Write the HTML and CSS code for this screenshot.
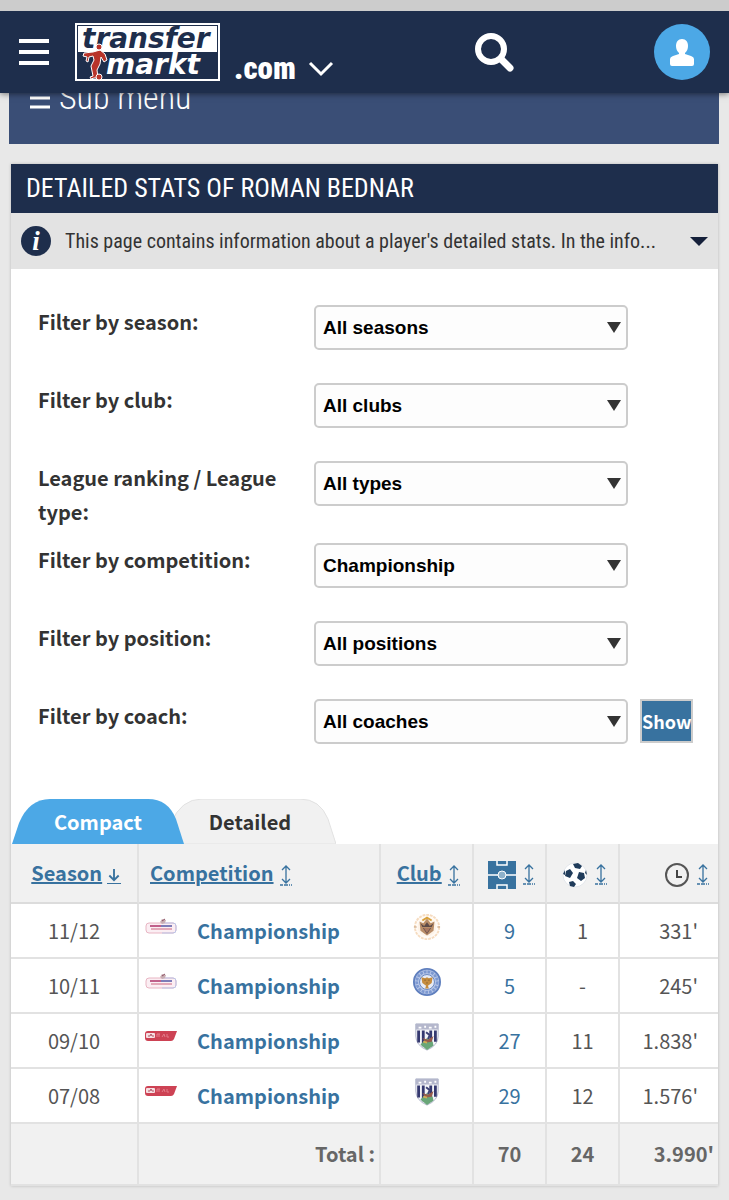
FILE: index.html
```html
<!DOCTYPE html>
<html lang="en">
<head>
    <meta charset="UTF-8">
    <meta name="viewport" content="width=device-width, initial-scale=1.0">
    <title>Detailed stats of Roman Bednar</title>
    <link rel="stylesheet" href="styles.css">
</head>
<body>
    <!-- shared icons -->
    <svg class="icon-defs" aria-hidden="true">
        <symbol id="icon-sort" viewBox="0 0 12 22">
            <path d="M6 1v17M2 5l4-4 4 4M2 14l4 4 4-4" fill="none" stroke="#38729f" stroke-width="1.3"/>
            <path d="M0 20h3M4 20h4M9 20h1M11 20h1" stroke="#38729f" stroke-width="1.3"/>
        </symbol>
        <symbol id="logo-npower" viewBox="0 0 32 18">
            <rect x="1" y="5" width="30" height="10" rx="3" fill="#fbeef3" stroke="#e8b5c3"/>
            <path d="M17 5h11q3 0 3 3v4q0 3-3 3H17" fill="none" stroke="#b9c5e8"/>
            <path d="M5 8h11" stroke="#c0608a" stroke-width="2"/>
            <path d="M16 8h11" stroke="#7d7cb8" stroke-width="2"/>
            <path d="M6 11h21" stroke="#e3a9b9" stroke-width="2"/>
            <path d="M15 4l2-3 4 1-1 3-3 1z" fill="#c9aeb3"/>
            <path d="M17 3l3-2" stroke="#8c4f62"/>
        </symbol>
        <symbol id="logo-cocacola" viewBox="0 0 32 18">
            <path d="M3 3h29l-3 8q-1 2-3 2H3q-3 0-3-3V6q0-3 3-3z" fill="#cd4254"/>
            <rect x="1" y="5" width="9" height="5" rx="1" fill="#f6dfe2"/>
            <path d="M3 8h2l1-2 1 2h2" fill="none" stroke="#b05667"/>
            <path d="M12 9V6h3M14 6v3M17 9l2-3 1 3M22 6v3h2" fill="none" stroke="#e37c8a"/>
        </symbol>
        <symbol id="crest-blackpool" viewBox="0 0 30 30">
            <circle cx="15" cy="15" r="13" fill="#fffaf5" stroke="#f6dcc0" stroke-width="2" stroke-dasharray="3 1"/>
            <circle cx="15" cy="15" r="10" fill="#fdf3e8"/>
            <path d="M7 9l4 2 4-5 4 5 4-2-1 10-7 5-7-5z" fill="#b98d68"/>
            <path d="M8 11l4 3 3-4 3 4 4-3-2 4H10z" fill="#5d4a48"/>
            <path d="M11 16l4 6 4-6" fill="#a9785f" stroke="#6c514c"/>
            <path d="M10 8l5-3 5 3" fill="none" stroke="#d8a13d" stroke-width="2"/>
            <path d="M1 15h3M26 15h3" stroke="#c19a77"/>
        </symbol>
        <symbol id="crest-leicester" viewBox="0 0 30 30">
            <circle cx="15" cy="15" r="14" fill="#b9c8e8" stroke="#5f7fbe" stroke-width="2"/>
            <circle cx="15" cy="15" r="11" fill="none" stroke="#7d99d1" stroke-width="3" stroke-dasharray="3 1"/>
            <circle cx="15" cy="15" r="8" fill="#e6ebf6" stroke="#6282c0"/>
            <path d="M9 10l4 1 2-1 2 1 4-1-1 6-4 3 1 3h-4l1-3-4-3z" fill="#c58c3e"/>
            <path d="M12 13h2M16 13h2M14 16h2" stroke="#8e6632"/>
        </symbol>
        <symbol id="crest-westbrom" viewBox="0 0 26 30">
            <path d="M1 1h24v13q0 10-12 15Q1 24 1 14z" fill="#f4f5f8" stroke="#aeb1c8"/>
            <path d="M1 1h24v6H1z" fill="#b4b7cc"/>
            <path d="M4 5h3M10 4h2M15 5h3M21 4h2" stroke="#fff" stroke-width="2"/>
            <path d="M4 8v13M9 8v17M17 8v17M22 8v12" stroke="#353970" stroke-width="3"/>
            <path d="M6 23l7-7 6 4 1 4-7 5z" fill="#69a678"/>
            <path d="M8 16l6 2 6-4-2 6-6 1z" fill="#985b4c"/>
            <path d="M12 10l4 3-2 4" fill="none" stroke="#3d4276" stroke-width="2"/>
            <path d="M9 20l4 1" stroke="#d5ad54" stroke-width="2"/>
        </symbol>
    </svg>

    <header class="header">
        <button class="menu-btn" type="button" aria-label="Menu">
            <svg width="30" height="28" viewBox="0 0 30 28"><path d="M0 3h30M0 14h30M0 25h30" stroke="#fff" stroke-width="4"/></svg>
        </button>
        <a class="logo" href="#" aria-label="Home">
            <svg width="145" height="58" viewBox="0 0 145 58">
                <rect x="1" y="1" width="143" height="56" fill="#1e2e4c" stroke="#fff" stroke-width="2"/>
                <rect x="3" y="3" width="139" height="26" fill="#fff"/>
                <text class="logo-text logo-top" x="7" y="25">transfer</text>
                <text class="logo-text logo-bottom" x="31" y="51">markt</text>
                <g stroke="#fff" stroke-width="1">
                    <path d="M18 29l7-2 5 4 2 6-3 2-3-5-1 7-3 6 1 8h-4l-3 1-1-2 3-1-2-10 3-6-1-4-4 1-1 5-2-1 1-4-4-1 1-3z" fill="#b8342a"/>
                    <circle cx="24" cy="24" r="3" fill="#b8342a"/>
                    <circle cx="24" cy="54" r="3" fill="#b8342a"/>
                </g>
            </svg>
        </a>
        <button class="domain-btn" type="button">
            .com
            <svg width="26" height="18" viewBox="0 0 26 18"><path d="M2 3l11 11L24 3" fill="none" stroke="#fff" stroke-width="3"/></svg>
        </button>
        <button class="search-btn" type="button" aria-label="Search">
            <svg width="42" height="42" viewBox="0 0 42 42">
                <circle cx="18" cy="18" r="13" fill="none" stroke="#fff" stroke-width="6"/>
                <path d="M28 28l9 9" stroke="#fff" stroke-width="7" stroke-linecap="round"/>
            </svg>
        </button>
        <button class="user-btn" type="button" aria-label="Log in">
            <svg width="56" height="56" viewBox="0 0 56 56">
                <circle cx="28" cy="28" r="28" fill="#4ca8e6"/>
                <path d="M28 15c4 0 6 3 6 7 0 3-1 5-3 7v1l6 2q3 1 3 3v5q0 2-2 2H18q-2 0-2-2v-5q0-2 3-3l6-2v-1c-2-2-3-4-3-7 0-4 2-7 6-7z" fill="#fff"/>
            </svg>
        </button>
    </header>

    <nav class="submenu">
        <a href="#">
            <svg width="20" height="26" viewBox="0 0 20 26"><path d="M0 5h20M0 14h20M0 23h20" stroke="#fff" stroke-width="3"/></svg>
            Sub menu
        </a>
    </nav>

    <main class="box">
        <h1>Detailed stats of Roman Bednar</h1>
        <div class="info">
            <svg width="30" height="30" viewBox="0 0 30 30">
                <circle cx="15" cy="15" r="15" fill="#1e2e4c"/>
                <text class="info-i" x="15" y="24">i</text>
            </svg>
            <p>This page contains information about a player's detailed stats. In the info...</p>
            <button type="button" aria-label="Show more">
                <svg width="18" height="9" viewBox="0 0 18 9"><path d="M0 0h18L9 9z" fill="#15203a"/></svg>
            </button>
        </div>

        <form class="filters">
            <div class="form-row">
                <label for="season">Filter by season:</label>
                <span class="select"><select id="season"><option>All seasons</option></select></span>
            </div>
            <div class="form-row">
                <label for="club">Filter by club:</label>
                <span class="select"><select id="club"><option>All clubs</option></select></span>
            </div>
            <div class="form-row">
                <label for="type">League ranking / League type:</label>
                <span class="select"><select id="type"><option>All types</option></select></span>
            </div>
            <div class="form-row">
                <label for="competition">Filter by competition:</label>
                <span class="select"><select id="competition"><option>Championship</option></select></span>
            </div>
            <div class="form-row">
                <label for="position">Filter by position:</label>
                <span class="select"><select id="position"><option>All positions</option></select></span>
            </div>
            <div class="form-row">
                <label for="coach">Filter by coach:</label>
                <span class="select"><select id="coach"><option>All coaches</option></select></span>
                <button class="show-btn" type="button">Show</button>
            </div>
        </form>

        <div class="tabs">
            <a class="tab active" href="#">
                <svg viewBox="0 0 172 45" preserveAspectRatio="none"><path d="M0 45L7 24Q17 0 38 0h98q20 0 28 20l8 25z" fill="#4ca8e6"/></svg>
                <span>Compact</span>
            </a>
            <a class="tab" href="#">
                <svg viewBox="0 0 172 45" preserveAspectRatio="none"><path d="M0 45L7 24Q17 0 38 0h98q20 0 28 20l8 25z" fill="#f1f1f1" stroke="#e2e2e2"/></svg>
                <span>Detailed</span>
            </a>
        </div>

        <table class="stats">
            <colgroup>
                <col class="col-season"><col><col class="col-club"><col class="col-num"><col class="col-num"><col class="col-min">
            </colgroup>
            <thead>
                <tr>
                    <th><a href="#">Season</a> <a class="sort-down" href="#" aria-label="Sorted by season"><svg width="14" height="16" viewBox="0 0 14 16"><path d="M7 1v12M2 8l5 5 5-5" fill="none" stroke="#38729f" stroke-width="2"/></svg></a></th>
                    <th class="left"><a href="#">Competition</a> <svg class="sort"><use href="#icon-sort"/></svg></th>
                    <th><a href="#">Club</a> <svg class="sort"><use href="#icon-sort"/></svg></th>
                    <th>
                        <a class="icon-link" href="#" aria-label="Appearances"><svg width="28" height="30" viewBox="0 0 28 30">
                            <path d="M0 1h28v28H0z" fill="#38729f"/>
                            <path d="M0 15h28M9 1v4h10V1M9 29v-4h10v4" fill="none" stroke="#fff" stroke-width="1.5"/>
                            <circle cx="14" cy="15" r="4" fill="#8fb2cb" stroke="#fff"/>
                        </svg></a>
                        <svg class="sort"><use href="#icon-sort"/></svg>
                    </th>
                    <th>
                        <a class="icon-link" href="#" aria-label="Goals"><svg width="26" height="30" viewBox="0 0 26 30">
                            <circle cx="13" cy="15" r="12" fill="#fff" stroke="#e3e6eb"/>
                            <path d="M11 4l5-1 4 3-2 3-5-1zM4 11l4-2 3 4-3 5-5-2zM17 12l5 1 1 5-4 3-4-3zM7 22l4-1 3 3-2 3-4-1zM1 14l2-4v5zM24 10l1 5-2-2z" fill="#203c5b"/>
                        </svg></a>
                        <svg class="sort"><use href="#icon-sort"/></svg>
                    </th>
                    <th class="right">
                        <a class="icon-link" href="#" aria-label="Minutes played"><svg width="26" height="30" viewBox="0 0 26 30">
                            <circle cx="13" cy="15" r="11" fill="none" stroke="#555" stroke-width="2"/>
                            <path d="M13 10v7h5" fill="none" stroke="#444" stroke-width="2"/>
                        </svg></a>
                        <svg class="sort"><use href="#icon-sort"/></svg>
                    </th>
                </tr>
            </thead>
            <tbody>
                <tr>
                    <td>11/12</td>
                    <td class="left"><div class="comp"><svg class="comp-logo"><use href="#logo-npower"/></svg><a href="#">Championship</a></div></td>
                    <td><svg class="crest"><use href="#crest-blackpool"/></svg></td>
                    <td><a href="#">9</a></td>
                    <td>1</td>
                    <td class="right">331'</td>
                </tr>
                <tr>
                    <td>10/11</td>
                    <td class="left"><div class="comp"><svg class="comp-logo"><use href="#logo-npower"/></svg><a href="#">Championship</a></div></td>
                    <td><svg class="crest"><use href="#crest-leicester"/></svg></td>
                    <td><a href="#">5</a></td>
                    <td>-</td>
                    <td class="right">245'</td>
                </tr>
                <tr>
                    <td>09/10</td>
                    <td class="left"><div class="comp"><svg class="comp-logo"><use href="#logo-cocacola"/></svg><a href="#">Championship</a></div></td>
                    <td><svg class="crest"><use href="#crest-westbrom"/></svg></td>
                    <td><a href="#">27</a></td>
                    <td>11</td>
                    <td class="right">1.838'</td>
                </tr>
                <tr>
                    <td>07/08</td>
                    <td class="left"><div class="comp"><svg class="comp-logo"><use href="#logo-cocacola"/></svg><a href="#">Championship</a></div></td>
                    <td><svg class="crest"><use href="#crest-westbrom"/></svg></td>
                    <td><a href="#">29</a></td>
                    <td>12</td>
                    <td class="right">1.576'</td>
                </tr>
            </tbody>
            <tfoot>
                <tr>
                    <td></td>
                    <td class="right">Total :</td>
                    <td></td>
                    <td>70</td>
                    <td>24</td>
                    <td class="right">3.990'</td>
                </tr>
            </tfoot>
        </table>
    </main>
</body>
</html>
```
FILE: styles.css
```css
* {
    box-sizing: border-box;
}
body {
    margin: 0;
    background: #e8e8e8;
    color: #333;
    font-family: "Noto Sans CJK JP", "Noto Sans", sans-serif;
    font-size: 20px;
    line-height: 34px;
}
button {
    padding: 0;
    border: 0;
    background: none;
    color: inherit;
    font: inherit;
    cursor: pointer;
}
svg {
    display: block;
    flex: none;
}
.icon-defs {
    display: none;
}

/* header */
.header {
    position: relative;
    z-index: 1;
    display: flex;
    align-items: center;
    height: 93px;
    padding: 0 19px;
    border-top: 11px solid #ccc;
    background: #1e2e4c;
    box-shadow: 0 1px 6px rgba(0, 0, 0, 0.5);
    color: #fff;
}
.logo {
    margin-left: 26px;
}
.logo-text {
    font-family: "DejaVu Sans", sans-serif;
    font-size: 28px;
    font-weight: bold;
    font-style: italic;
}
.logo-top {
    fill: #1e2e4c;
}
.logo-bottom {
    fill: #fff;
}
.domain-btn {
    display: flex;
    align-items: center;
    gap: 12px;
    margin-left: 14px;
    padding-top: 34px;
    font-family: "Roboto Condensed", "Noto Sans CJK JP", sans-serif;
    font-size: 31px;
    font-weight: 900;
    line-height: 34px;
}
.search-btn {
    margin: 0 auto;
}

/* sub menu, runs in under the header */
.submenu {
    display: flex;
    align-items: center;
    height: 94px;
    margin: -43px 10px 20px 9px;
    background: #3a4e76;
}
.submenu a {
    display: flex;
    align-items: center;
    gap: 9px;
    padding-left: 21px;
    color: #fff;
    font-family: "Roboto Condensed", "Noto Sans CJK JP", sans-serif;
    font-size: 34px;
    font-weight: 300;
    text-decoration: none;
}

/* content box */
.box {
    margin: 0 11px 14px;
    background: #fff;
    box-shadow: 0 0 3px rgba(0, 0, 0, 0.2);
}
h1 {
    margin: 0;
    padding: 0 15px;
    background: #1e2e4c;
    color: #fff;
    font-family: "Roboto Condensed", "Noto Sans CJK JP", sans-serif;
    font-size: 26px;
    font-weight: normal;
    line-height: 49px;
    text-transform: uppercase;
    white-space: nowrap;
}
.info {
    display: flex;
    align-items: center;
    height: 56px;
    padding: 0 10px;
    background: #e3e3e3;
}
.info p {
    flex: 1;
    min-width: 0;
    margin: 0 10px 0 14px;
    font-family: "Roboto Condensed", "Noto Sans CJK JP", sans-serif;
    font-size: 20px;
    white-space: nowrap;
    overflow: hidden;
}
.info-i {
    fill: #fff;
    font-family: "Liberation Serif", serif;
    font-size: 27px;
    font-weight: bold;
    font-style: italic;
    text-anchor: middle;
}

/* filters */
.filters {
    display: flex;
    flex-direction: column;
    gap: 14px;
    padding: 36px 25px 36px 27px;
}
.form-row {
    display: grid;
    grid-template-columns: minmax(0, 276fr) minmax(0, 314fr) 65px;
    align-items: start;
    min-height: 64px;
}
.form-row label {
    padding-right: 24px;
    font-weight: bold;
}
.select {
    position: relative;
}
.select::after {
    content: "";
    position: absolute;
    top: 17px;
    right: 7px;
    border: 7px solid transparent;
    border-top: 11px solid #333;
    border-bottom: 0;
    pointer-events: none;
}
.select select {
    display: block;
    width: 100%;
    height: 45px;
    padding: 0 7px;
    border: 2px solid #ccc;
    border-radius: 5px;
    appearance: none;
    background: #fdfdfd;
    color: #000;
    font-family: "Liberation Sans", sans-serif;
    font-size: 19px;
    font-weight: bold;
}
.show-btn {
    justify-self: end;
    width: 53px;
    height: 44px;
    border: 2px solid #ccc;
    background: #38729f;
    color: #fff;
    font-size: 18px;
    font-weight: bold;
    line-height: 40px;
}

/* tabs */
.tabs {
    display: flex;
    padding-left: 1px;
}
.tab {
    display: grid;
    width: 172px;
    height: 45px;
    color: #333;
    font-weight: bold;
    text-align: center;
    text-decoration: none;
}
.tab + .tab {
    margin-left: -20px;
}
.tab svg,
.tab span {
    grid-area: 1 / 1;
    width: 100%;
    height: 100%;
}
.tab span {
    z-index: 1;
    line-height: 45px;
}
.tab.active {
    z-index: 1;
    color: #fff;
}

/* stats table */
.stats {
    width: 100%;
    border-spacing: 0;
    table-layout: fixed;
    color: #555;
    text-align: center;
}
.col-season {
    width: 128px;
}
.col-club {
    width: 93px;
}
.col-num {
    width: 73px;
}
.col-min {
    width: 98px;
}
.stats th,
.stats td {
    height: 55px;
    padding: 0;
    border-right: 2px solid #e2e2e2;
    border-bottom: 2px solid #e2e2e2;
}
.stats th:last-child,
.stats td:last-child {
    border-right: 0;
}
.stats th {
    height: 60px;
    padding-left: 4px;
    background: #f1f1f1;
    border-bottom-color: #dcdcdc;
    white-space: nowrap;
}
.stats a {
    color: #38729f;
    text-decoration: none;
}
.stats th a {
    text-decoration: underline;
}
.stats th svg {
    display: inline-block;
    vertical-align: middle;
}
.stats .sort-down svg {
    border-bottom: 1px solid #38729f;
}
.stats .sort {
    width: 12px;
    height: 22px;
    margin-left: 2px;
}
.stats .left {
    text-align: left;
}
.stats th.left {
    padding-left: 11px;
}
.stats .right {
    padding-right: 20px;
    text-align: right;
}
.stats th.right {
    padding-right: 9px;
}
.comp {
    display: flex;
    align-items: center;
    gap: 20px;
    padding-left: 6px;
    font-weight: bold;
}
.comp-logo {
    width: 32px;
    height: 18px;
    margin-bottom: 8px;
}
.crest {
    width: 30px;
    height: 28px;
    margin: 0 auto 8px;
}
.stats tfoot td {
    height: 62px;
    background: #f1f1f1;
    color: #666;
    font-weight: bold;
}
.stats tfoot .right {
    padding-right: 4px;
}
```
